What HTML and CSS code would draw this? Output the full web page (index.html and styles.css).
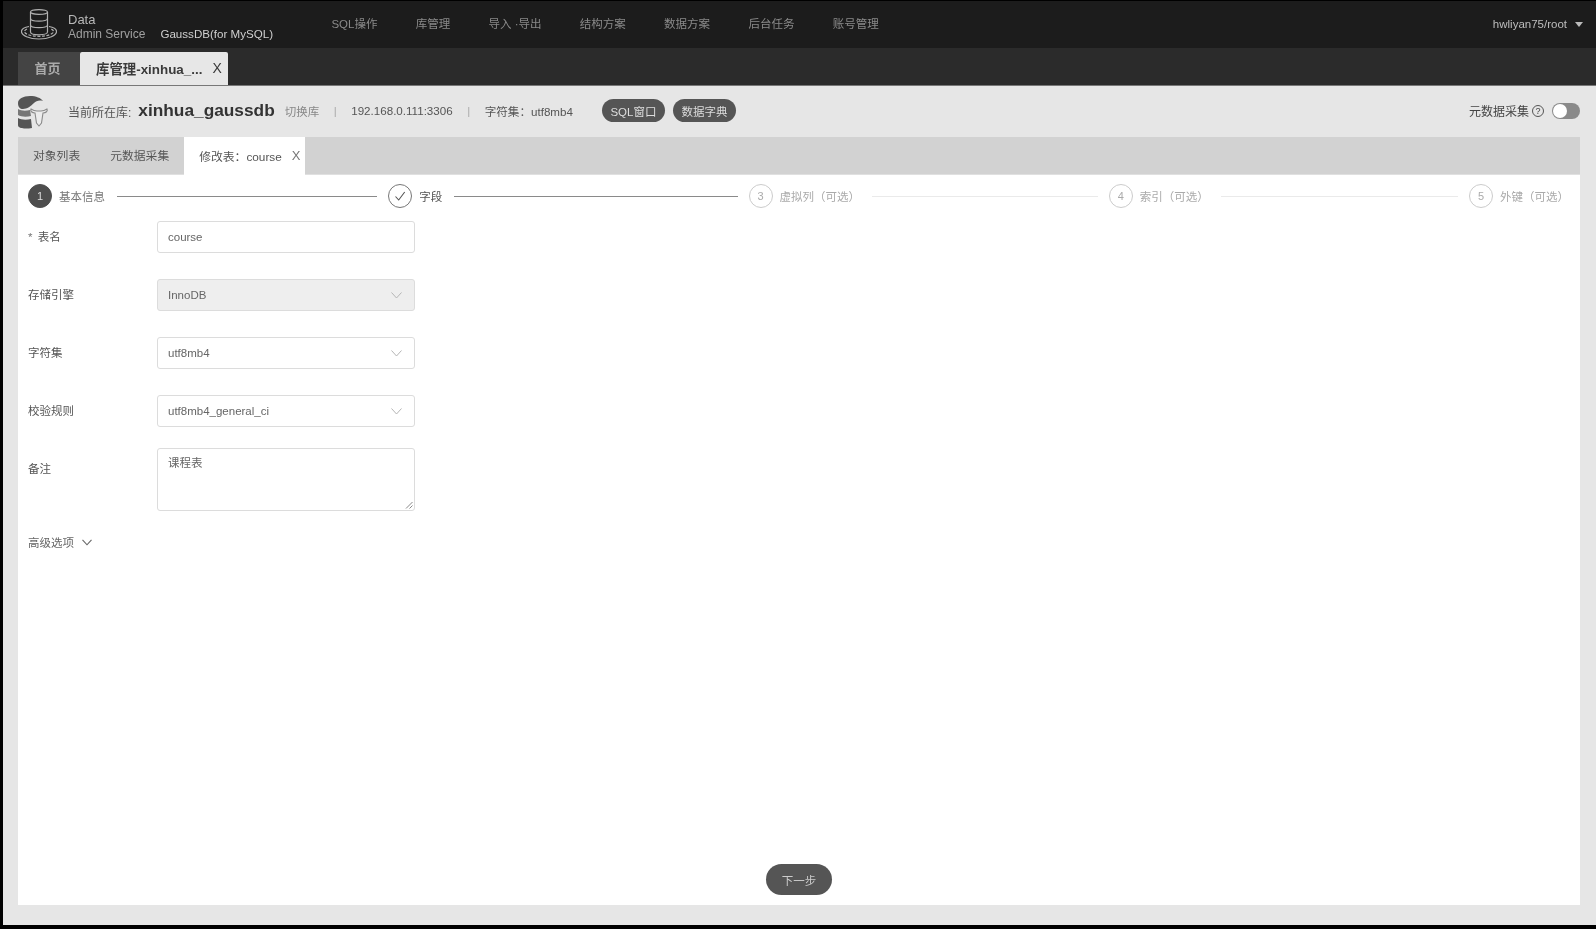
FILE: index.html
```html
<!DOCTYPE html>
<html lang="zh-CN">
<head>
<meta charset="utf-8">
<title>Data Admin Service</title>
<link rel="stylesheet" href="styles.css">
</head>
<body>
<div class="frame">
  <header class="topbar">
    <svg class="logo" width="36" height="31" viewBox="0 0 36 31" fill="none" stroke="#b0b0b0" stroke-width="1.2">
      <ellipse cx="18" cy="3" rx="8.500" ry="2.400"/>
      <path d="M9.500 3v20c0 1.600 3.800 2.800 8.500 2.800s8.500-1.200 8.500-2.800V3"/>
      <path d="M9.500 9.500c0 1.500 3.800 2.600 8.500 2.600s8.500-1.100 8.500-2.600M9.500 16c0 1.500 3.800 2.600 8.500 2.600s8.500-1.100 8.500-2.600"/>
      <path d="M8 17.500c-4.500.8-7.500 2.500-7.500 5 0 3.800 7.600 7.500 17.500 7.500s17.500-3.700 17.500-7.500c0-2.500-3-4.200-7.500-5"/>
      <path d="M6 20c-1.600.7-2.500 1.600-2.500 2.500 0 2.500 6.500 4.800 14.500 4.800s14.500-2.300 14.500-4.800c0-.900-.9-1.800-2.500-2.500" stroke-dasharray="3 1.500"/>
    </svg>
    <div class="brand">
      <span class="brand-name">Data</span>
      <span class="brand-sub">Admin Service</span>
    </div>
    <span class="brand-engine">GaussDB(for MySQL)</span>
    <nav class="nav">
      <a>SQL操作</a>
      <a>库管理</a>
      <a>导入 ·导出</a>
      <a>结构方案</a>
      <a>数据方案</a>
      <a>后台任务</a>
      <a>账号管理</a>
    </nav>
    <div class="user"><span>hwliyan75/root</span><i class="caret"></i></div>
  </header>

  <div class="pagetabs">
    <div class="pagetab">首页</div>
    <div class="pagetab pagetab-active"><span>库管理-xinhua_...</span><span class="pagetab-x">X</span></div>
  </div>

  <main class="main">
    <div class="infobar">
      <svg class="dbicon" width="31" height="34" viewBox="0 0 31 34">
        <path fill="#555" d="M0 7C0 3 5 0 12 0c6 0 11 2 13 5-4-1-7 0-9 2-3 3-7 6-11 6-3 0-5-2-5-6z"/>
        <path fill="#777" d="M0 13c3 2 8 2 12 1l1 6c-4 1-10 1-13-1z"/>
        <path fill="#555" d="M0 22c3 2 9 2 13 1l1 9c-6 1-14 1-14-3z"/>
        <path fill="#ececec" stroke="#8a8a8a" stroke-width="1.100" d="M13 13c3 2 4 2 6 2h4c2 0 3 0 6-2 1 2-1 4-4 4l-1.500 10-2.500 3-2.500-3L17 17c-3 0-5-2-4-4z"/>
      </svg>
      <span class="info-label">当前所在库:</span>
      <strong class="info-db">xinhua_gaussdb</strong>
      <a class="info-switch">切换库</a>
      <span class="info-sep">|</span>
      <span class="info-text">192.168.0.111:3306</span>
      <span class="info-sep">|</span>
      <span class="info-text">字符集：utf8mb4</span>
      <div class="pills">
        <button class="pill">SQL窗口</button>
        <button class="pill">数据字典</button>
      </div>
      <div class="collect">
        <span>元数据采集</span>
        <span class="help">?</span>
        <span class="toggle"><i></i></span>
      </div>
    </div>

    <div class="panel">
      <div class="subtabs">
        <div class="subtab">对象列表</div>
        <div class="subtab">元数据采集</div>
        <div class="subtab subtab-active"><span>修改表：course</span><span class="subtab-x">X</span></div>
      </div>

      <div class="content">
        <ol class="steps">
          <li class="step step-current"><span class="step-dot">1</span><span class="step-name">基本信息</span><span class="step-line"></span></li>
          <li class="step step-done">
            <span class="step-dot"><svg width="14" height="14" viewBox="0 0 14 14" fill="none" stroke="#555" stroke-width="1.100"><path d="M2.500 7.500l3.200 3.500 6-8"/></svg></span>
            <span class="step-name">字段</span><span class="step-line"></span>
          </li>
          <li class="step"><span class="step-dot">3</span><span class="step-name">虚拟列（可选）</span><span class="step-line"></span></li>
          <li class="step"><span class="step-dot">4</span><span class="step-name">索引（可选）</span><span class="step-line"></span></li>
          <li class="step step-last"><span class="step-dot">5</span><span class="step-name">外键（可选）</span></li>
        </ol>

        <form class="form">
          <div class="row">
            <label class="row-label"><span class="req">*</span> 表名</label>
            <div class="field">course</div>
          </div>
          <div class="row">
            <label class="row-label">存储引擎</label>
            <div class="field field-select field-disabled">InnoDB<svg class="chev" width="11" height="7" viewBox="0 0 11 7" fill="none" stroke="#b5b5b5"><path d="M.5.5L5.500 6l5-5.500"/></svg></div>
          </div>
          <div class="row">
            <label class="row-label">字符集</label>
            <div class="field field-select">utf8mb4<svg class="chev" width="11" height="7" viewBox="0 0 11 7" fill="none" stroke="#b5b5b5"><path d="M.5.5L5.500 6l5-5.500"/></svg></div>
          </div>
          <div class="row">
            <label class="row-label">校验规则</label>
            <div class="field field-select">utf8mb4_general_ci<svg class="chev" width="11" height="7" viewBox="0 0 11 7" fill="none" stroke="#b5b5b5"><path d="M.5.5L5.500 6l5-5.500"/></svg></div>
          </div>
          <div class="row row-note">
            <label class="row-label">备注</label>
            <div class="field field-area">课程表<svg class="grip" width="8" height="8" viewBox="0 0 8 8" fill="none" stroke="#888"><path d="M1 7.500L7.500 1M4.500 7.500l3-3"/></svg></div>
          </div>
          <div class="advanced"><span>高级选项</span><svg width="10" height="7" viewBox="0 0 10 7" fill="none" stroke="#666" stroke-width="1.100"><path d="M.5.800L5 5.800 9.500.8"/></svg></div>
        </form>

        <div class="footer"><button class="next">下一步</button></div>
      </div>
    </div>
  </main>
</div>
</body>
</html>
```
FILE: styles.css
```css
* { box-sizing: border-box; }
html, body { margin: 0; height: 100%; }
body {
  background: #000;
  font-family: "Liberation Sans", "Noto Sans CJK SC", sans-serif;
  font-size: 11.500px;
  color: #555;
  overflow: hidden;
}
.frame {
  height: 929px;
  padding: 1px 0 4px 3px;
  display: flex;
  flex-direction: column;
  filter: blur(0.55px);
}
.topbar {
  height: 47px;
  flex: none;
  background: #1c1c1c;
  display: flex;
  align-items: center;
  padding: 0 13px 0 18px;
  color: #b8b8b8;
}
.logo { flex: none; margin-right: 11px; margin-top: -1px; }
.brand { display: flex; flex-direction: column; margin-top: 3px; }
.brand-name { font-size: 13px; line-height: 15px; }
.brand-sub { font-size: 12px; line-height: 14px; color: #a0a0a0; }
.brand-engine { margin: 18px 0 0 15px; color: #cfcfcf; font-size: 11.600px; width: 110px; white-space: nowrap; }
.nav { display: flex; gap: 38.300px; margin-left: 61px; color: #8a8a8a; margin-top: -3px; }
.user { margin-left: auto; display: flex; align-items: center; gap: 8px; color: #bdbdbd; margin-top: -1px; }
.caret { width: 0; height: 0; border: 4.500px solid transparent; border-top: 5px solid #bbb; border-bottom: 0; }

.pagetabs {
  height: 38px;
  flex: none;
  background: #2b2b2b;
  display: flex;
  align-items: flex-end;
  padding-left: 15px;
  border-bottom: 1px solid #777;
}
.pagetab {
  height: 33px;
  width: 62px;
  background: #444;
  color: #aaa;
  font-size: 13px;
  font-weight: bold;
  display: flex;
  align-items: center;
  justify-content: center;
  padding: 0 3px 2px 0;
}
.pagetab-active {
  width: 148px;
  background: #e7e7e7;
  color: #3a3a3a;
  border-radius: 2px 2px 0 0;
  gap: 10px;
  justify-content: flex-start;
  padding: 0 0 2px 16px;
  font-size: 13.400px;
}
.pagetab-x { font-weight: normal; font-size: 14px; }

.main {
  flex: 1;
  background: #e6e6e6;
  display: flex;
  flex-direction: column;
  padding: 0 16px 20px 15px;
  min-height: 0;
}
.infobar {
  height: 51px;
  flex: none;
  display: flex;
  align-items: center;
  color: #444;
  padding-bottom: 2px;
}
.dbicon { flex: none; margin-right: 19px; margin-top: 4px; }
.info-label { color: #555; margin-top: 2px; font-size: 12px; }
.info-db { font-size: 17.300px; color: #333; margin: 0 10px 0 7px; }
.info-switch { color: #888; }
.info-sep { color: #aaa; margin: 0 14.500px; }
.info-text { color: #555; font-size: 11.600px; }
.pills { display: flex; gap: 8px; margin-left: 29px; }
.pill {
  width: 63px;
  height: 23px;
  border: 0;
  padding: 0;
  border-radius: 12px;
  background: #555;
  color: #ddd;
  font: inherit;
}
.collect { margin-left: auto; display: flex; align-items: center; color: #444; font-size: 12px; }
.help {
  width: 12px;
  height: 12px;
  margin: 0 8px 0 3px;
  border: 1px solid #555;
  border-radius: 50%;
  font-size: 9px;
  line-height: 10px;
  text-align: center;
}
.toggle {
  width: 28px;
  height: 16px;
  border-radius: 8px;
  background: #8a8a8a;
  display: flex;
  padding: 1px;
}
.toggle i { width: 14px; height: 14px; border-radius: 50%; background: #fff; }

.panel { flex: 1; display: flex; flex-direction: column; min-height: 0; }
.subtabs {
  height: 38px;
  flex: none;
  background: #d2d2d2;
  display: flex;
  border-bottom: 1px solid #e0e0e0;
  font-size: 11.800px;
}
.subtab {
  padding: 0 15px 2px;
  display: flex;
  align-items: center;
  color: #555;
}
.subtab-active {
  width: 121px;
  height: 38px;
  background: #fff;
  gap: 10px;
  white-space: nowrap;
}
.subtab-x { font-size: 13px; color: #777; }

.content {
  flex: 1;
  background: #fff;
  display: flex;
  flex-direction: column;
  padding: 9px 15px 10px 10px;
  min-height: 0;
}
.steps {
  list-style: none;
  margin: 0;
  padding: 0;
  display: grid;
  grid-template-columns: repeat(4, 1fr) auto;
  height: 24px;
  flex: none;
}
.step { display: flex; align-items: center; color: #aaa; }
.step-dot {
  width: 24px;
  height: 24px;
  flex: none;
  border-radius: 50%;
  border: 1px solid #ccc;
  display: flex;
  align-items: center;
  justify-content: center;
  font-size: 11px;
  color: #aaa;
}
.step-name { margin-left: 7px; white-space: nowrap; }
.step-line { flex: 1; height: 1px; background: #eaeaea; margin: 0 11px 0 12px; }
.step-current .step-dot { background: #4e4e4e; border-color: #4e4e4e; color: #ddd; }
.step-current .step-name { color: #777; }
.step-current .step-line, .step-done .step-line { background: #8a8a8a; }
.step-done .step-dot { border-color: #777; }
.step-done .step-name { color: #555; }
.step-last { width: 96px; }

.form { margin-top: 13px; }
.row { display: flex; height: 32px; margin-bottom: 26px; align-items: flex-start; }
.row-label { width: 129px; flex: none; line-height: 32px; color: #555; }
.req { color: #777; margin-right: 2px; }
.field {
  width: 258px;
  height: 32px;
  border: 1px solid #dcdcdc;
  border-radius: 3px;
  padding: 0 10px;
  color: #666;
  background: #fff;
  position: relative;
  display: flex;
  justify-content: space-between;
  align-items: center;
}
.field-disabled { background: #eee; }
.chev { margin-right: 2px; }
.row-note { height: 58px; margin-bottom: 0; }
.field-area { height: 63px; margin-top: -5px; align-items: flex-start; padding-top: 1px; line-height: 27px; }
.grip { position: absolute; right: 1px; bottom: 1px; }
.advanced {
  display: flex;
  align-items: center;
  gap: 8px;
  margin-top: 23px;
  height: 16px;
  color: #666;
}
.footer { margin-top: auto; display: flex; justify-content: center; padding-left: 5px; }
.next {
  width: 66px;
  height: 31px;
  border: 0;
  padding: 0;
  border-radius: 16px;
  background: #555;
  color: #ccc;
  font: inherit;
}
```
